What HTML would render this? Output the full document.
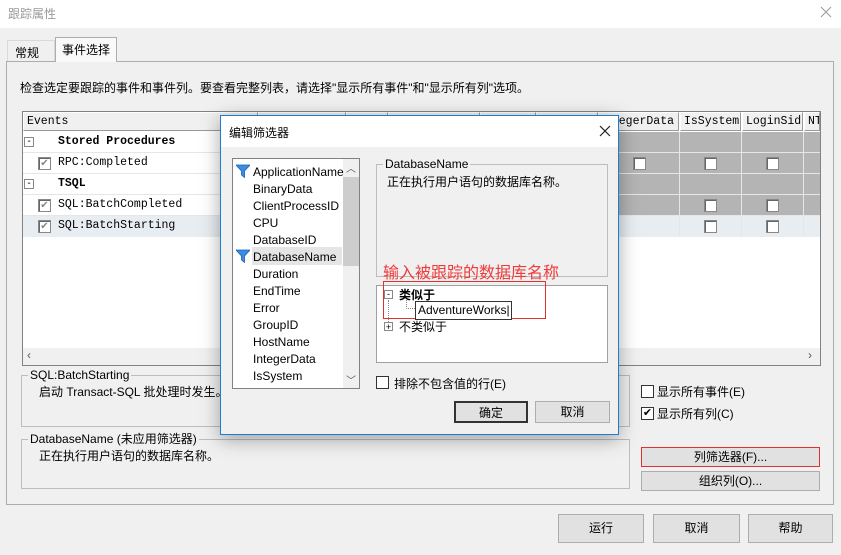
<!DOCTYPE html>
<html><head><meta charset="utf-8"><style>
*{box-sizing:border-box;margin:0;padding:0}
body{width:841px;height:555px;overflow:hidden;background:#f0f0f0;font-family:"Liberation Sans","Noto Sans CJK SC",sans-serif;font-size:12px;color:#000;position:relative}
.a{position:absolute;white-space:nowrap}
.mono{font-family:"Liberation Mono","Noto Sans CJK SC",monospace;font-size:11.5px}
.btn{position:absolute;background:#e1e1e1;border:1px solid #adadad;text-align:center;font-size:12px}
.cb{position:absolute;width:13px;height:13px;border:1px solid #333;background:#fff}
.gcb{position:absolute;width:13px;height:13px;border:1px solid #888;background:#fff;box-shadow:inset 1px 1px 0 #666}
.gcb.k{color:#888;font-size:10px;line-height:11px;text-align:center}
.grp{position:absolute;border:1px solid #bdbdbd}
.grp .lbl{position:absolute;top:-8px;left:6px;background:#f0f0f0;padding:0 2px;line-height:14px}
.hd{position:absolute;top:112px;height:19px;background:#f0f0f0;border:1px solid #999;border-top-color:#fff;border-left-color:#fff;line-height:17px;padding-left:3px}
</style></head><body>
<div class="a" style="left:0;top:0;width:841px;height:28px;background:#fff"></div>
<div class="a" style="left:8px;top:5px;color:#999;font-size:12px">跟踪属性</div>
<svg class="a" style="left:820px;top:6px" width="12" height="12"><path d="M1 1L11 11M11 1L1 11" stroke="#999" stroke-width="1"/></svg>

<div class="a" style="left:7px;top:40px;width:48px;height:22px;border:1px solid #d9d9d9;border-bottom:none;background:#f0f0f0;padding:3px 0 0 7px">常规</div>
<div class="a" style="left:55px;top:37px;width:62px;height:25px;border:1px solid #adadad;border-bottom:none;background:#f9f9f9;padding:3px 0 0 6px;z-index:2">事件选择</div>
<div class="a" style="left:6px;top:61px;width:828px;height:444px;border:1px solid #adadad;background:#f0f0f0"></div>
<div class="a" style="left:20px;top:79px">检查选定要跟踪的事件和事件列。要查看完整列表，请选择"显示所有事件"和"显示所有列"选项。</div>

<div class="a" style="left:22px;top:111px;width:799px;height:255px;border:1px solid #828282;background:#fff;overflow:hidden"></div>
<div class="hd mono" style="left:23px;width:235px">Events</div>
<div class="hd" style="left:258px;width:88px"></div>
<div class="hd" style="left:346px;width:42px"></div>
<div class="hd" style="left:388px;width:92px"></div>
<div class="hd" style="left:480px;width:56px"></div>
<div class="hd" style="left:536px;width:62px"></div>
<div class="hd mono" style="left:598px;width:81px;text-align:right;padding-right:4px">egerData</div>
<div class="hd mono" style="left:680px;width:61px">IsSystem</div>
<div class="hd mono" style="left:742px;width:61px">LoginSid</div>
<div class="hd mono" style="left:804px;width:16px;overflow:hidden">NT</div>
<div class="a" style="left:258px;top:132px;width:562px;height:84px;background:#b4b4b4"></div>
<div class="a" style="left:23px;top:216px;width:797px;height:21px;background:#e8edf2"></div>
<div class="a" style="left:23px;top:152px;width:797px;height:1px;background:#e6e6e6"></div>
<div class="a" style="left:23px;top:173px;width:797px;height:1px;background:#e6e6e6"></div>
<div class="a" style="left:23px;top:194px;width:797px;height:1px;background:#e6e6e6"></div>
<div class="a" style="left:23px;top:215px;width:797px;height:1px;background:#e6e6e6"></div>
<div class="a" style="left:679px;top:132px;width:1px;height:105px;background:#e6e6e6"></div>
<div class="a" style="left:741px;top:132px;width:1px;height:105px;background:#e6e6e6"></div>
<div class="a" style="left:803px;top:132px;width:1px;height:105px;background:#e6e6e6"></div>
<div class="a" style="left:24px;top:137px;width:10px;height:10px;border:1px solid #888;font-size:10px;line-height:7px;text-align:center">-</div>
<div class="a mono" style="left:58px;top:135px;font-weight:bold">Stored Procedures</div>
<div class="gcb k" style="left:38px;top:157px">✔</div><div class="a mono" style="left:58px;top:156px">RPC:Completed</div>
<div class="a" style="left:24px;top:179px;width:10px;height:10px;border:1px solid #888;font-size:10px;line-height:7px;text-align:center">-</div>
<div class="a mono" style="left:58px;top:177px;font-weight:bold">TSQL</div>
<div class="gcb k" style="left:38px;top:199px">✔</div><div class="a mono" style="left:58px;top:198px">SQL:BatchCompleted</div>
<div class="gcb k" style="left:38px;top:220px">✔</div><div class="a mono" style="left:58px;top:219px">SQL:BatchStarting</div>
<div class="gcb" style="left:633px;top:157px"></div><div class="gcb" style="left:704px;top:157px"></div><div class="gcb" style="left:766px;top:157px"></div>
<div class="gcb" style="left:704px;top:199px"></div><div class="gcb" style="left:766px;top:199px"></div>
<div class="gcb" style="left:704px;top:220px"></div><div class="gcb" style="left:766px;top:220px"></div>
<div class="a" style="left:23px;top:348px;width:797px;height:17px;background:#f0f0f0"></div>
<div class="a" style="left:27px;top:348px;color:#555">‹</div>
<div class="a" style="left:808px;top:348px;color:#555">›</div>

<div class="grp" style="left:21px;top:375px;width:609px;height:52px"><span class="lbl">SQL:BatchStarting</span></div>
<div class="a" style="left:39px;top:383px">启动 Transact-SQL 批处理时发生。</div>
<div class="grp" style="left:21px;top:439px;width:609px;height:50px"><span class="lbl">DatabaseName (未应用筛选器)</span></div>
<div class="a" style="left:39px;top:447px">正在执行用户语句的数据库名称。</div>
<div class="cb" style="left:641px;top:385px"></div><div class="a" style="left:657px;top:383px">显示所有事件(E)</div>
<div class="cb" style="left:641px;top:407px;font-size:11px;line-height:11px;text-align:center">✔</div><div class="a" style="left:657px;top:405px">显示所有列(C)</div>
<div class="btn" style="left:641px;top:447px;width:179px;height:20px;line-height:18px;border-color:#e03030">列筛选器(F)...</div>
<div class="btn" style="left:641px;top:471px;width:179px;height:20px;line-height:18px">组织列(O)...</div>
<div class="btn" style="left:558px;top:514px;width:86px;height:29px;line-height:27px">运行</div>
<div class="btn" style="left:653px;top:514px;width:87px;height:29px;line-height:27px">取消</div>
<div class="btn" style="left:748px;top:514px;width:85px;height:29px;line-height:27px">帮助</div>

<div class="a" style="left:220px;top:115px;width:399px;height:320px;border:1px solid #1a7fd4;background:#f0f0f0;box-shadow:0 4px 18px rgba(0,0,0,.35)"></div>
<div class="a" style="left:221px;top:116px;width:397px;height:31px;background:#fff"></div>
<div class="a" style="left:229px;top:124px">编辑筛选器</div>
<svg class="a" style="left:599px;top:125px" width="12" height="12"><path d="M1 1L11 11M11 1L1 11" stroke="#222" stroke-width="1.2"/></svg>
<div class="a" style="left:232px;top:158px;width:128px;height:231px;border:1px solid #828282;background:#fff"></div>
<div class="a" style="left:343px;top:159px;width:16px;height:229px;background:#f0f0f0"></div>
<div class="a" style="left:343px;top:177px;width:16px;height:89px;background:#cdcdcd"></div>
<div class="a" style="left:346px;top:160px;font-size:10px;color:#555">︿</div>
<div class="a" style="left:346px;top:372px;font-size:10px;color:#555">﹀</div>
<div class="a" style="left:252px;top:247px;width:90px;height:18px;background:#e5e5e5"></div>
<svg class="a" style="left:236px;top:164px" width="14" height="14" viewBox="0 0 14 14"><path d="M0 1h14L8.5 7v6.5L5.5 11V7z" fill="#3a8de0" stroke="#1a5fb0" stroke-width=".8"/></svg>
<svg class="a" style="left:236px;top:249px" width="14" height="14" viewBox="0 0 14 14"><path d="M0 1h14L8.5 7v6.5L5.5 11V7z" fill="#3a8de0" stroke="#1a5fb0" stroke-width=".8"/></svg>
<div class="a" style="left:253px;top:164px;line-height:17px">ApplicationName<br>BinaryData<br>ClientProcessID<br>CPU<br>DatabaseID<br>DatabaseName<br>Duration<br>EndTime<br>Error<br>GroupID<br>HostName<br>IntegerData<br>IsSystem</div>
<div class="grp" style="left:376px;top:164px;width:232px;height:113px"><span class="lbl">DatabaseName</span></div>
<div class="a" style="left:387px;top:173px">正在执行用户语句的数据库名称。</div>
<div class="a" style="left:383px;top:259px;color:#f03a3a;font-size:16px">输入被跟踪的数据库名称</div>
<div class="a" style="left:376px;top:285px;width:232px;height:78px;border:1px solid #a0a0a0;background:#fff"></div>
<div class="a" style="left:383px;top:281px;width:163px;height:38px;border:1px solid #e03030"></div>
<div class="a" style="left:384px;top:290px;width:9px;height:9px;border:1px solid #888;font-size:9px;line-height:6px;text-align:center">-</div>
<div class="a" style="left:399px;top:286px;font-weight:bold">类似于</div>
<div class="a" style="left:388px;top:300px;width:1px;height:22px;border-left:1px dotted #888"></div>
<div class="a" style="left:406px;top:300px;width:9px;height:9px;border-left:1px dotted #888;border-bottom:1px dotted #888"></div>
<div class="a" style="left:415px;top:301px;width:97px;height:19px;border:1px solid #333;background:#fff;padding:1px 0 0 2px">AdventureWorks|</div>
<div class="a" style="left:384px;top:322px;width:9px;height:9px;border:1px solid #888;font-size:9px;line-height:8px;text-align:center">+</div>
<div class="a" style="left:399px;top:318px">不类似于</div>
<div class="cb" style="left:376px;top:376px;border-color:#333"></div>
<div class="a" style="left:394px;top:375px">排除不包含值的行(E)</div>
<div class="btn" style="left:454px;top:401px;width:74px;height:22px;line-height:20px;border:2px solid #333">确定</div>
<div class="btn" style="left:535px;top:401px;width:75px;height:22px;line-height:20px">取消</div>
</body></html>
